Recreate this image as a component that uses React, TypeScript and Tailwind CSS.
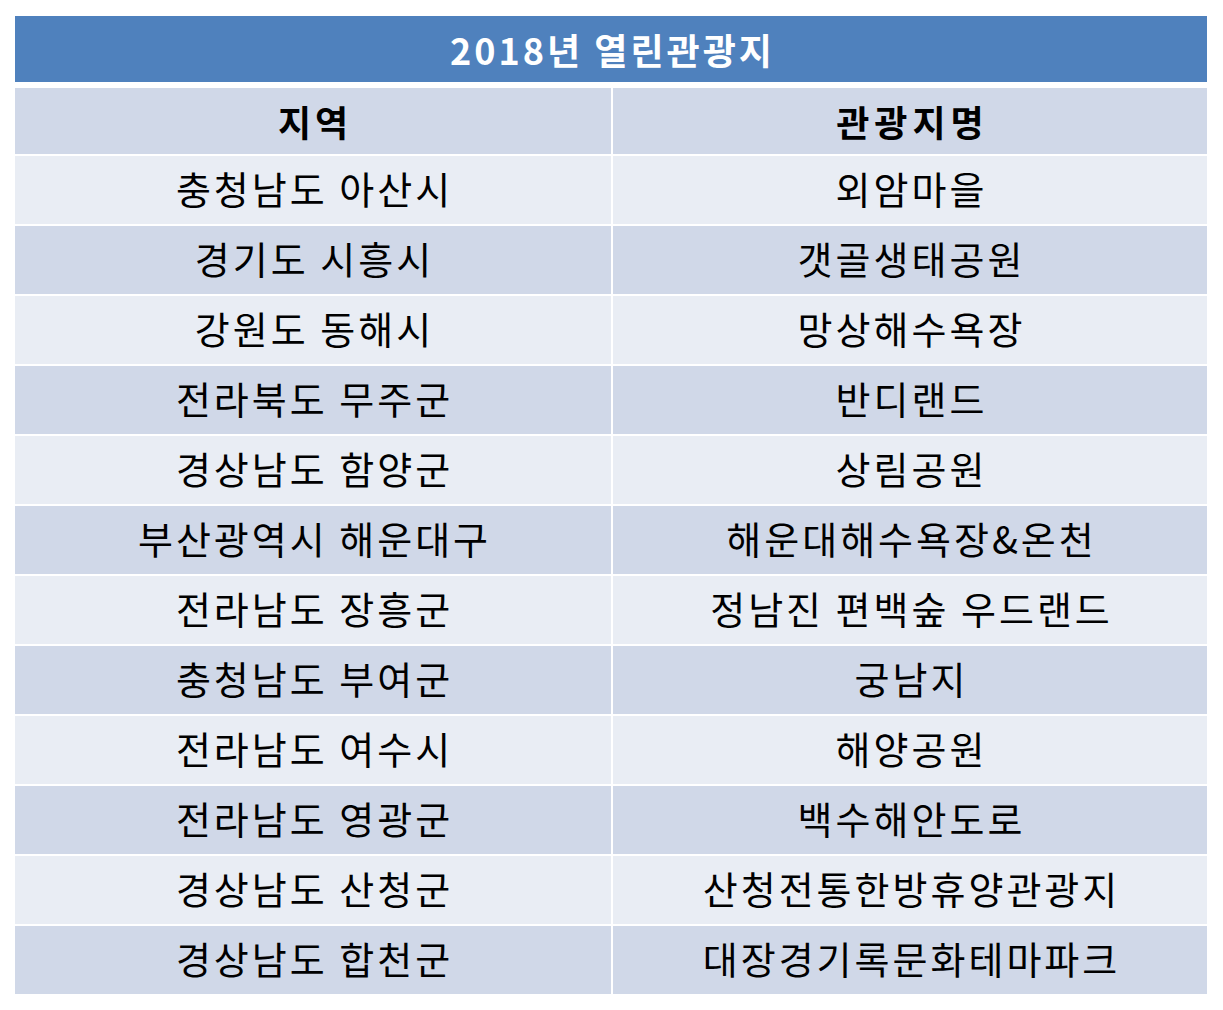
const rows: [string, string][] = [
  ["충청남도 아산시", "외암마을"],
  ["경기도 시흥시", "갯골생태공원"],
  ["강원도 동해시", "망상해수욕장"],
  ["전라북도 무주군", "반디랜드"],
  ["경상남도 함양군", "상림공원"],
  ["부산광역시 해운대구", "해운대해수욕장&온천"],
  ["전라남도 장흥군", "정남진 편백숲 우드랜드"],
  ["충청남도 부여군", "궁남지"],
  ["전라남도 여수시", "해양공원"],
  ["전라남도 영광군", "백수해안도로"],
  ["경상남도 산청군", "산청전통한방휴양관광지"],
  ["경상남도 합천군", "대장경기록문화테마파크"],
];

export default function App() {
  return (
    <div
      className="w-[1223px] h-[1010px] bg-white pt-4 pl-[15px]"
      style={{ fontFamily: '"Noto Sans CJK KR", "Noto Sans", sans-serif' }}
    >
      <div className="w-[1192px]">
        <div className="h-[66px] bg-[#4f81bd] flex items-center justify-center text-white font-bold text-[36px] tracking-[3px] leading-none pl-[3px]">
          2018년 열린관광지
        </div>
        <div className="mt-[6px] grid grid-cols-[596px_594px] gap-[2px]">
          <div className="h-[66px] bg-[#d0d8e8] flex items-center justify-center font-bold text-[36px] tracking-[4px] pl-[4px] text-black">
            지역
          </div>
          <div className="h-[66px] bg-[#d0d8e8] flex items-center justify-center font-bold text-[36px] tracking-[5px] pl-[5px] text-black">
            관광지명
          </div>
          {rows.map(([region, place], i) => {
            const bg = i % 2 === 0 ? "bg-[#e9edf4]" : "bg-[#d0d8e8]";
            return [
              <div key={`r${i}`} className={`h-[68px] ${bg} flex items-center justify-center text-[38px] text-black tracking-[3px] pl-[3px] pb-[6px]`}>
                {region}
              </div>,
              <div key={`p${i}`} className={`h-[68px] ${bg} flex items-center justify-center text-[38px] text-black tracking-[3px] pl-[3px] pb-[6px]`}>
                {place}
              </div>,
            ];
          })}
        </div>
      </div>
    </div>
  );
}
